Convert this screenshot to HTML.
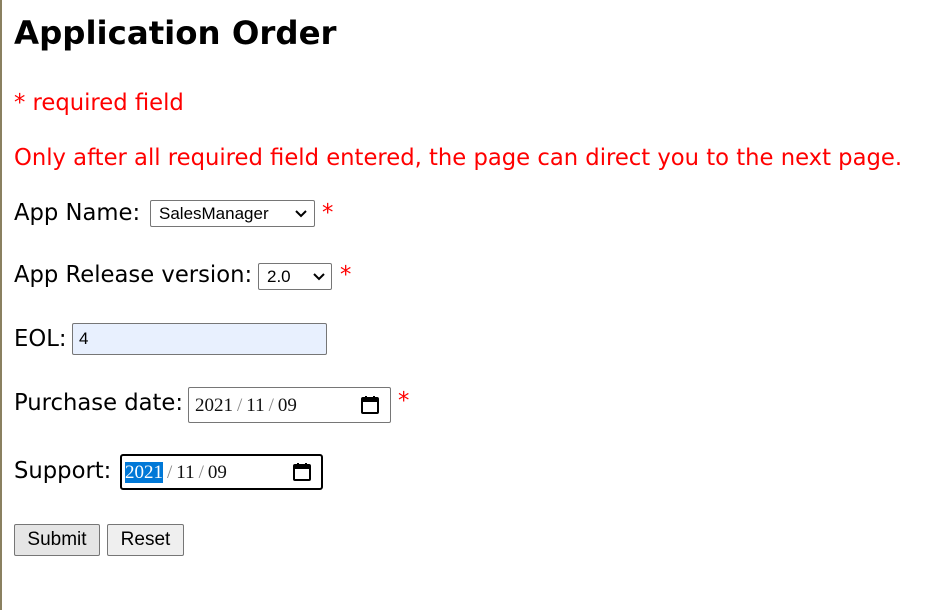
<!DOCTYPE html>
<html><head><style>
body{margin:0;width:942px;height:610px;background:#fff;position:relative;overflow:hidden;font-family:"DejaVu Sans",sans-serif;}
.l{position:absolute;left:0;top:0;width:2px;height:610px;background:#8a8060;}
.a{position:absolute;white-space:nowrap;}
.t{font-size:22.7px;color:#000;}
.r{color:#f00;font-size:22.7px;}
.box{position:absolute;border:1px solid #767676;border-radius:2px;background:#fff;box-sizing:border-box;font-size:17px;font-family:"Liberation Sans",sans-serif;}
.chev{position:absolute;}
.btn{position:absolute;background:#efefef;border:1px solid #767676;border-radius:2px;box-sizing:border-box;font-size:19px;text-align:center;line-height:29px;font-family:"Liberation Sans",sans-serif;}
.cal{position:absolute;width:20px;height:20px;}
.mono{font-family:"Liberation Serif",serif;font-size:19px;color:#111;}
.s{color:#888;margin:0 4px;}
</style></head><body>
<div class="l"></div>
<div class="a" style="left:14px;top:14px;font-size:32.4px;font-weight:bold;">Application Order</div>
<div class="a r" style="left:14px;top:90px;">* required field</div>
<div class="a r" style="left:14px;top:145px;">Only after all required field entered, the page can direct you to the next page.</div>

<div class="a t" style="left:14px;top:200px;">App Name:</div>
<div class="box" style="left:150px;top:200px;width:165px;height:27px;"><span class="a" style="left:8px;top:3px;">SalesManager</span>
<svg class="chev" style="left:144px;top:9px" width="12" height="8"><path d="M1 1l5 5 5-5" fill="none" stroke="#000" stroke-width="2"/></svg></div>
<div class="a r" style="left:322px;top:200px;">*</div>

<div class="a t" style="left:14px;top:262px;">App Release version:</div>
<div class="box" style="left:258px;top:263px;width:74px;height:27px;"><span class="a" style="left:8px;top:3px;">2.0</span>
<svg class="chev" style="left:54px;top:9px" width="12" height="8"><path d="M1 1l5 5 5-5" fill="none" stroke="#000" stroke-width="2"/></svg></div>
<div class="a r" style="left:340px;top:262px;">*</div>

<div class="a t" style="left:14px;top:326px;">EOL:</div>
<div class="box" style="left:72px;top:323px;width:255px;height:32px;background:#e8f0fe;"><span class="a" style="left:6px;top:5px;">4</span></div>

<div class="a t" style="left:14px;top:390px;">Purchase date:</div>
<div class="box" style="left:188px;top:387px;width:203px;height:36px;"><span class="a mono" style="left:6px;top:7px;">2021<span class="s">/</span>11<span class="s">/</span>09</span>
<svg class="cal" style="left:171px;top:7px" viewBox="0 0 20 20"><rect x="2" y="3" width="16" height="15" rx="1" fill="none" stroke="#000" stroke-width="2"/><rect x="2" y="3" width="16" height="4" fill="#000"/><rect x="5" y="1" width="2" height="3"/><rect x="13" y="1" width="2" height="3"/></svg></div>
<div class="a r" style="left:398px;top:388px;">*</div>

<div class="a t" style="left:14px;top:458px;">Support:</div>
<div class="box" style="left:120px;top:454px;width:203px;height:36px;border:2px solid #000;border-radius:3px;"><span class="a mono" style="left:3px;top:6px;"><span style="background:#0078d7;color:#fff">2021</span><span class="s">/</span>11<span class="s">/</span>09</span>
<svg class="cal" style="left:170px;top:6px" viewBox="0 0 20 20"><rect x="2" y="3" width="16" height="15" rx="1" fill="none" stroke="#000" stroke-width="2"/><rect x="2" y="3" width="16" height="4" fill="#000"/><rect x="5" y="1" width="2" height="3"/><rect x="13" y="1" width="2" height="3"/></svg></div>

<div class="btn" style="left:14px;top:524px;width:86px;height:32px;background:#e5e5e5;">Submit</div>
<div class="btn" style="left:107px;top:524px;width:77px;height:32px;">Reset</div>
</body></html>
